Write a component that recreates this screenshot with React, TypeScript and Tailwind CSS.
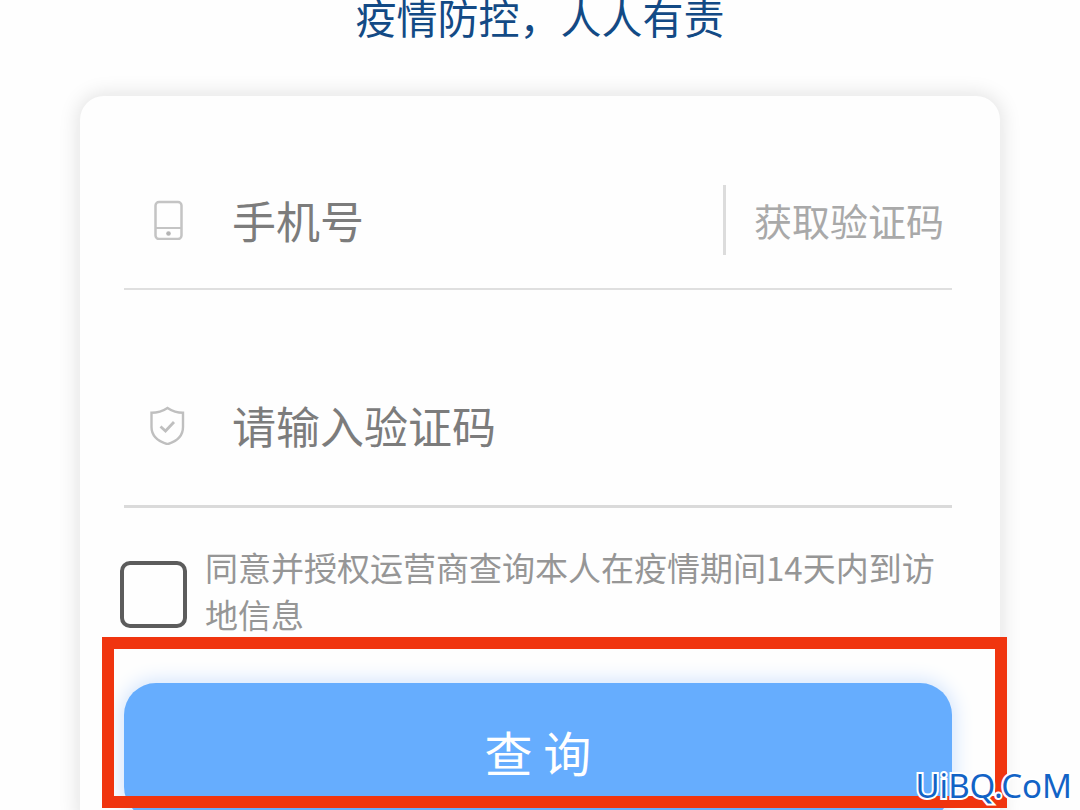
import { useState } from "react";

function PhoneIcon() {
  return (
    <svg viewBox="0 0 40 40" className="h-10 w-10 shrink-0" fill="none" stroke="#c4c4c4" strokeWidth="2.5">
      <rect x="7.5" y="2" width="26" height="37" rx="3.5" />
      <path d="M7.5 28h26" strokeWidth="2" />
      <circle cx="20.5" cy="33.5" r="2.3" fill="#b4b4b4" stroke="none" />
    </svg>
  );
}

function ShieldIcon() {
  return (
    <svg viewBox="0 0 40 40" className="h-10 w-10 shrink-0" fill="none" stroke="#bfbfbf" strokeWidth="2.4">
      <path d="M19.5 3C15 6 9 7.800 3.500 7.800V22C3.500 30.500 9 36 19.500 39.200C30 36 35 30.500 35 22V7.800C30 7.800 24 6 19.500 3Z" />
      <path d="M12.500 21.500l5 4.500 8.500-9" strokeWidth="2.800" />
    </svg>
  );
}

export default function App() {
  const [phone, setPhone] = useState("");
  const [code, setCode] = useState("");
  const [agreed, setAgreed] = useState(false);

  return (
    <main className="relative flex h-screen flex-col overflow-hidden bg-[#fefefe] font-['Noto_Sans_CJK_SC','Noto_Sans',sans-serif]">
      <h1 className="text-center text-[41px] leading-8 text-[#134a85]">疫情防控，人人有责</h1>

      <form
        className="mx-20 mt-16 flex-1 rounded-t-3xl bg-[#fefefe] pt-14 pr-12 pl-11 shadow-[0_0_20px_2px_#e2e2e2]"
        onSubmit={(e) => e.preventDefault()}
      >
        <div className="flex h-[138px] items-center border-b-2 border-[#dfdfdf] pr-2 pl-6">
          <PhoneIcon />
          <input
            type="tel"
            aria-label="手机号"
            placeholder="手机号"
            value={phone}
            onChange={(e) => setPhone(e.target.value)}
            className="ml-11 min-w-0 flex-1 text-[44px] leading-16 text-[#555] outline-none placeholder:text-[#7c7c7c]"
          />
          <button type="button" className="border-l-3 border-[#dcdcdc] pl-7 text-[38px] leading-[70px] text-[#a9a9a9]">
            获取验证码
          </button>
        </div>

        <div className="mt-[54px] flex h-[164px] items-center border-b-3 border-[#dadada] pl-6">
          <ShieldIcon />
          <input
            type="text"
            aria-label="请输入验证码"
            placeholder="请输入验证码"
            value={code}
            onChange={(e) => setCode(e.target.value)}
            className="ml-11 min-w-0 flex-1 text-[44px] leading-16 text-[#555] outline-none placeholder:text-[#7c7c7c]"
          />
        </div>

        <label className="mt-9 -ml-1 flex items-center gap-[18px]">
          <input
            type="checkbox"
            checked={agreed}
            onChange={(e) => setAgreed(e.target.checked)}
            className="mt-1.5 h-[67px] w-[67px] shrink-0 appearance-none rounded-[10px] border-4 border-[#5c5c5c] checked:bg-[#66adfe]"
          />
          <span className="text-[33px] leading-[47px] text-[#969696]">
            同意并授权运营商查询本人在疫情期间14天内到访地信息
          </span>
        </label>

        <div className="relative mt-[45px]">
          <button
            type="submit"
            className="block h-[136px] w-full rounded-[32px] bg-[#66adfe] text-5xl text-white shadow-[0_0_20px_2px_#cfe2fd]"
          >
            查 询
          </button>
          <div className="pointer-events-none absolute -top-[46px] -right-[55px] -left-[22px] h-[171px] border-12 border-[#f0350f]" />
        </div>
      </form>

      <span className="absolute right-2 bottom-1 font-['Noto_Sans',sans-serif] text-[33px] leading-10 text-[#1263c6] [paint-order:stroke] [-webkit-text-stroke:4px_white]">
        UiBQ.CoM
      </span>
    </main>
  );
}
